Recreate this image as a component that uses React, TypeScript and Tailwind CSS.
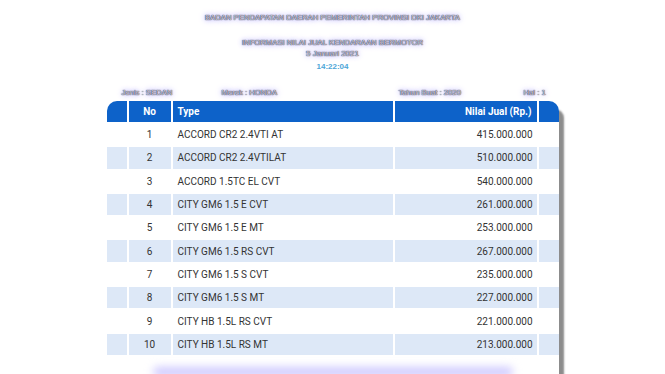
import React from 'react';

const rows = [
  { no: 1, type: 'ACCORD CR2 2.4VTI AT', nilai: '415.000.000' },
  { no: 2, type: 'ACCORD CR2 2.4VTILAT', nilai: '510.000.000' },
  { no: 3, type: 'ACCORD 1.5TC EL CVT', nilai: '540.000.000' },
  { no: 4, type: 'CITY GM6 1.5 E CVT', nilai: '261.000.000' },
  { no: 5, type: 'CITY GM6 1.5 E MT', nilai: '253.000.000' },
  { no: 6, type: 'CITY GM6 1.5 RS CVT', nilai: '267.000.000' },
  { no: 7, type: 'CITY GM6 1.5 S CVT', nilai: '235.000.000' },
  { no: 8, type: 'CITY GM6 1.5 S MT', nilai: '227.000.000' },
  { no: 9, type: 'CITY HB 1.5L RS CVT', nilai: '221.000.000' },
  { no: 10, type: 'CITY HB 1.5L RS MT', nilai: '213.000.000' },
];

const glow =
  "text-[#d4d4e4] [text-shadow:0_0_1px_#222232,0_0_1px_#222232,0_0_5px_#8d85ff,0_0_10px_#c4beff] font-['Liberation_Sans',Arial,sans-serif]";

export default function App() {
  return (
    <div className="w-full min-h-[374px] bg-white overflow-hidden font-['Roboto',Arial,sans-serif]">
      <div className="flex flex-col items-center pt-[13px]">
        <p className={`${glow} text-[7.7px] leading-[9px]`}>BADAN PENDAPATAN DAERAH PEMERINTAH PROVINSI DKI JAKARTA</p>
        <p className={`${glow} text-[7.7px] leading-[9px] mt-[16px]`}>INFORMASI NILAI JUAL KENDARAAN BERMOTOR</p>
        <p className={`${glow} text-[8px] leading-[10px] mt-[2px]`}>5 Januari 2021</p>
        <p className="text-[8px] leading-[10px] mt-[3px] font-bold text-[#4ea6d8] font-['Liberation_Sans',Arial,sans-serif]">14:22:04</p>
      </div>

      <div className="w-[452px] mx-auto mt-[16px]">
        <div className={`${glow} grid grid-cols-[100px_177px_125px_35px] text-[7.7px] leading-[10px] pl-[15px]`}>
          <span>Jenis : SEDAN</span>
          <span>Merek : HONDA</span>
          <span>Tahun Buat : 2020</span>
          <span>Hal : 1</span>
        </div>

        <div className="mt-[3px] rounded-tl-[10px] rounded-tr-[10px] shadow-[6px_7px_2px_-1px_#8c8c8c] bg-white pb-[60px]">
          <div className="grid grid-cols-[20px_42px_220px_142px_20px] gap-[2px] text-[10px] text-[#333]">
            <div className="h-[21px] bg-[#0d62c9] rounded-tl-[10px]" />
            <div className="h-[21px] bg-[#0d62c9] flex items-center justify-center text-white font-bold">No</div>
            <div className="h-[21px] bg-[#0d62c9] flex items-center pl-[5px] text-white font-bold">Type</div>
            <div className="h-[21px] bg-[#0d62c9] flex items-center justify-end pr-[5px] text-white font-bold">Nilai Jual (Rp.)</div>
            <div className="h-[21px] bg-[#0d62c9] rounded-tr-[10px]" />
            {rows.map((r, i) => {
              const bg = i % 2 === 1 ? 'bg-[#dde8f7]' : 'bg-white';
              return (
                <React.Fragment key={r.no}>
                  <div className={`h-[21.3px] ${bg}`} />
                  <div className={`h-[21.3px] ${bg} flex items-center justify-center`}>{r.no}</div>
                  <div className={`h-[21.3px] ${bg} flex items-center pl-[5px]`}>{r.type}</div>
                  <div className={`h-[21.3px] ${bg} flex items-center justify-end pr-[4px]`}>{r.nilai}</div>
                  <div className={`h-[21.3px] ${bg}`} />
                </React.Fragment>
              );
            })}
          </div>
          <div className="mt-[12px] mx-auto w-[360px] h-[10px] rounded-full bg-[#cfcaff] blur-[4px]" />
        </div>
      </div>
    </div>
  );
}
